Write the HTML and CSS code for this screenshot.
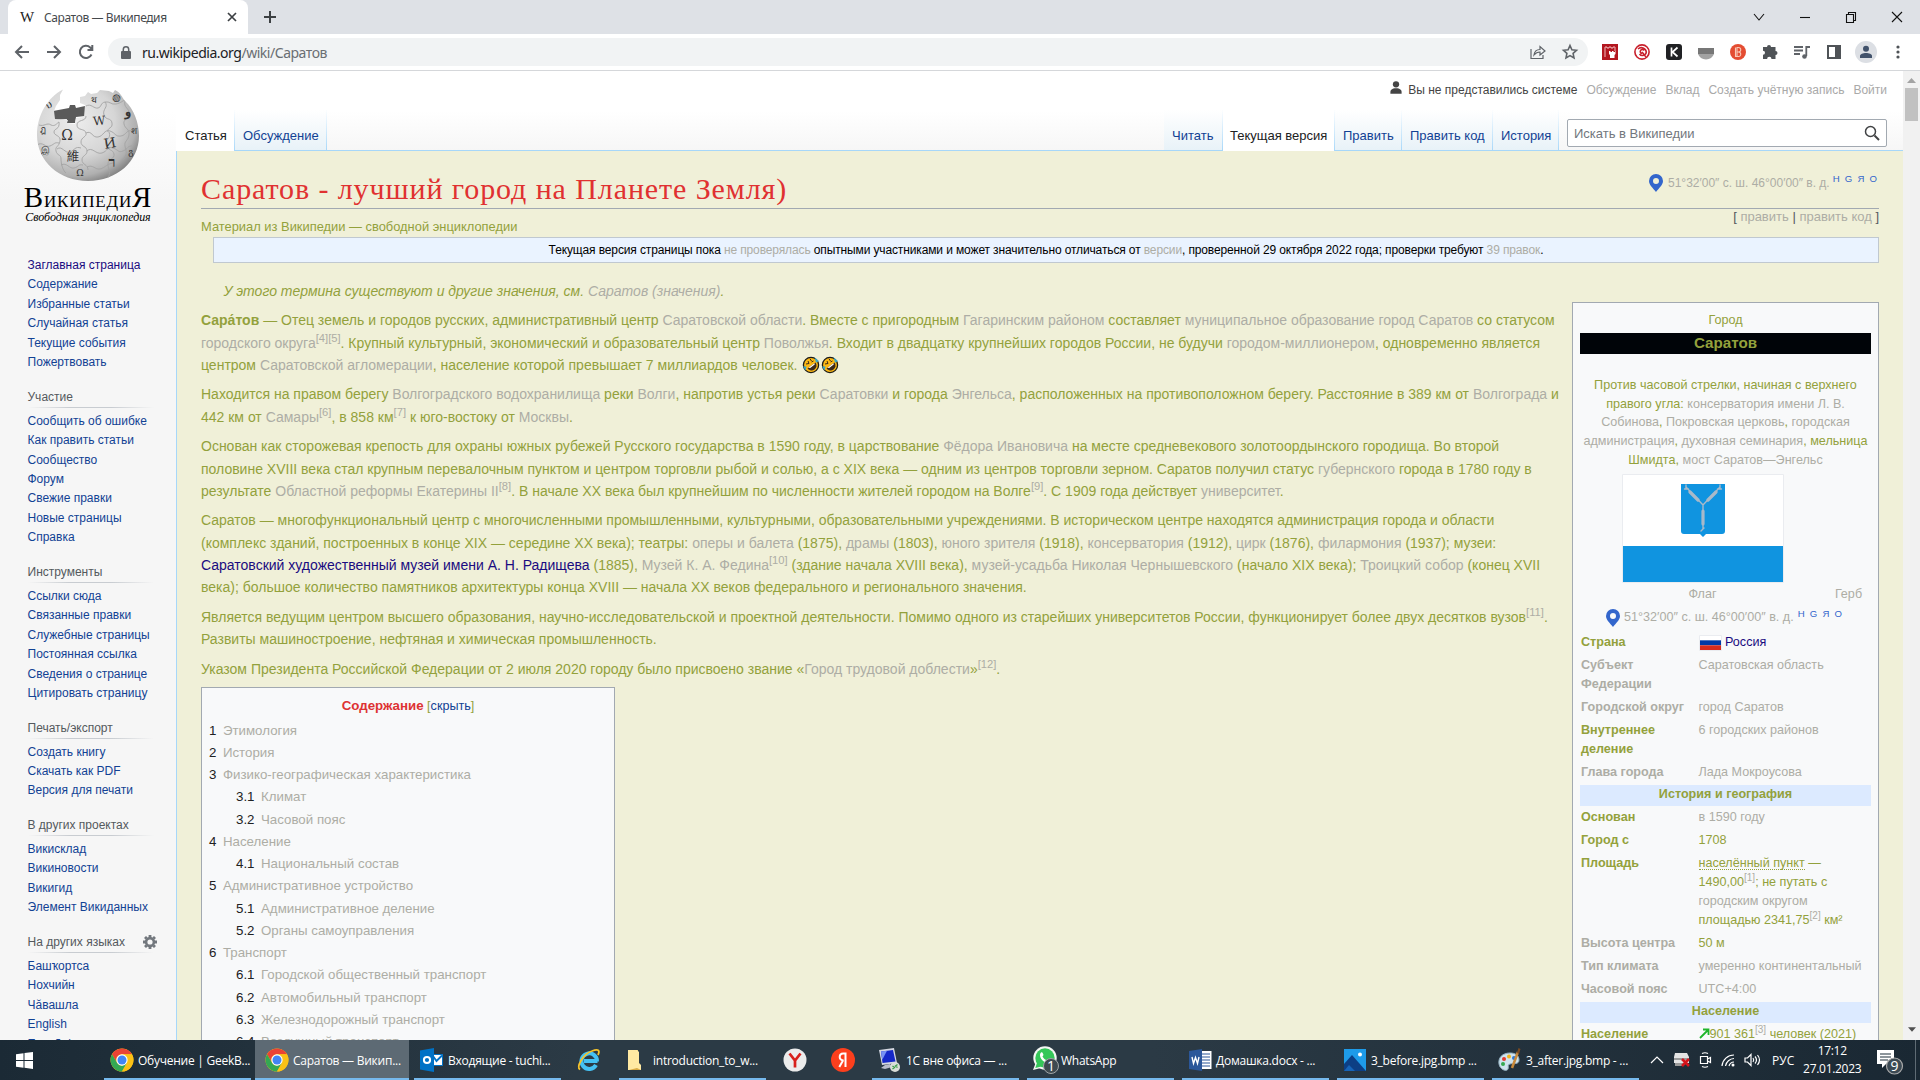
FILE: index.html
```html
<!DOCTYPE html>
<html lang="ru">
<head>
<meta charset="utf-8">
<title>Саратов — Википедия</title>
<link rel="stylesheet" href="styles.css">
</head>
<body>
<svg class="defs" width="0" height="0" aria-hidden="true">
  <symbol id="pin" viewBox="0 0 14 18"><path fill="#36c" fill-rule="evenodd" d="M7 0a7 7 0 0 1 7 7c0 4-4 7-7 11C4 14 0 11 0 7a7 7 0 0 1 7-7zm0 4a3 3 0 1 0 0 6 3 3 0 0 0 0-6z"/></symbol>
  <symbol id="user" viewBox="0 0 20 20"><path d="M10 11c-5.920 0-8 3-8 5v3h16v-3c0-2-2.080-5-8-5z"/><circle cx="10" cy="5.500" r="4.500"/></symbol>
  <symbol id="chrome" viewBox="0 0 48 48">
    <circle cx="24" cy="24" r="23" fill="#fbc116"/>
    <path fill="#ea4335" d="M4.100 12.500A23 23 0 0 1 43.900 12.500H24A11.500 11.500 0 0 0 14 29.700z"/>
    <path fill="#34a853" d="M4.100 12.500 14 29.700A11.500 11.500 0 0 0 24 35.500L34 29.700 24 47A23 23 0 0 1 4.100 12.500z"/>
    <path fill="#fbc116" d="M43.900 12.500A23 23 0 0 1 24 47L34 29.700A11.500 11.500 0 0 0 34 18.300L24 12.500z"/>
    <circle cx="24" cy="24" r="11.300" fill="#fff"/><circle cx="24" cy="24" r="9" fill="#4285f4"/>
  </symbol>
  <symbol id="rofl" viewBox="0 0 18 18">
    <circle cx="9" cy="9" r="7.600" fill="#fdb913" stroke="#1c1b18" stroke-width="1.300"/>
    <path fill="#3c2a1b" d="M5.500 12.500 13.500 6.500a5 5 0 0 1-8 6z"/>
    <path fill="#fff" d="m6.500 11.700 6-4.500.2 1.300-4.500 3.500z"/>
    <path fill="none" stroke="#3c2a1b" stroke-width="1" d="m4 8 3-.5L6 5m3.500 0L8 2.800M9.500 6l2-1"/>
    <path fill="#3ba8c8" d="M1 10.500 4.500 10.500 3.500 14.500zM12.500 1.500l4.500 3.500-3 1.700z"/>
  </symbol>
</svg>

<div class="tabstrip">
  <div class="tab"><span class="fav">W</span><span class="tab-title">Саратов — Википедия</span>
    <svg class="tab-x" width="10" height="10" viewBox="0 0 10 10"><path d="m1 1 8 8M9 1 1 9" stroke="#3c4043" stroke-width="1.700"/></svg></div>
  <svg class="plus" width="14" height="14" viewBox="0 0 14 14"><path d="M7 1v12M1 7h12" stroke="#3c4043" stroke-width="2"/></svg>
  <div class="win">
    <svg width="12" height="12" viewBox="0 0 12 12"><path d="m1 3 5 6 5-6"/></svg>
    <svg width="12" height="12" viewBox="0 0 12 12"><path d="M1 6.500h10"/></svg>
    <svg width="12" height="12" viewBox="0 0 12 12"><path d="M1.500 3.500h7v8h-7zM3.500 3.500v-2h7v8h-2"/></svg>
    <svg width="12" height="12" viewBox="0 0 12 12"><path d="m1 1 10 10M11 1 1 11"/></svg>
  </div>
</div>

<div class="toolbar">
  <svg class="nb" width="16" height="16" viewBox="0 0 16 16"><path d="M15 8H2M8 2 2 8l6 6"/></svg>
  <svg class="nb" width="16" height="16" viewBox="0 0 16 16"><path d="M1 8h13M8 2l6 6-6 6"/></svg>
  <svg class="nb" width="16" height="16" viewBox="0 0 16 16"><path d="M13.500 10.500a6.100 6.100 0 1 1-1.300-7L14 5.200M14.300 1v5H9.500"/></svg>
  <div class="omni">
    <svg class="lock" width="10" height="13" viewBox="0 0 10 13"><path fill="#5f6368" d="M1 5h8a1 1 0 0 1 1 1v6a1 1 0 0 1-1 1H1a1 1 0 0 1-1-1V6a1 1 0 0 1 1-1z"/><path fill="none" stroke="#5f6368" stroke-width="1.500" d="M2.300 5.500v-2a2.700 2.700 0 0 1 5.400 0v2"/></svg>
    <span class="url">ru.wikipedia.org<span>/wiki/Саратов</span></span>
    <svg class="share" width="16" height="16" viewBox="0 0 16 16"><path d="M1 5v9.500h12V11M4 11c.5-4 3-5.500 6-5.500V2.500L15 7l-5 4V8C7.500 8 6 8.500 4 11z"/></svg>
    <svg class="star" width="16" height="16" viewBox="0 0 16 16"><path d="m8 1.500 1.900 4.300 4.600.5-3.400 3.100.9 4.600-4-2.400-4 2.400.9-4.600L1.500 6.300l4.600-.5z"/></svg>
  </div>
  <div class="exts">
    <svg width="16" height="16" viewBox="0 0 16 16"><path fill="#b3161f" d="M0 0h16v16H0z"/><path fill="none" stroke="#f0b8ba" d="M3 13V3h2v1h2V3h2v1h2V3h2v4"/><path fill="#fff" d="M7 7h1.500v1H10V7h1.500v1H13V7h.500v3l-1 1v3h-4.500v-3l-1-1z"/></svg>
    <svg width="16" height="16" viewBox="0 0 16 16"><g fill="none" stroke="#c8202c" stroke-width="1.600"><circle cx="8" cy="8" r="7.100"/><path d="M4 5a5 5 0 0 1 8.300 3A3.800 3.800 0 0 1 5.500 10M10 6.500A2 2 0 1 0 8 9.500M8 8l4 5"/></g></svg>
    <svg width="16" height="16" viewBox="0 0 16 16"><rect width="16" height="16" rx="3" fill="#202124"/><path d="M5.500 3.500v9M11.500 3.500 6.500 8l5 4.500" fill="none" stroke="#fff" stroke-width="1.700"/></svg>
    <svg width="16" height="16" viewBox="0 0 16 16"><path fill="#777" d="M0 4h16v6H0z"/><path fill="#a2a2a2" d="M0 10h16q-2 5-8 5.500Q2 15 0 10z"/></svg>
    <svg width="16" height="16" viewBox="0 0 16 16"><circle cx="8" cy="8" r="8" fill="#e44d32"/><path d="M5.500 3.500v9h3a2.200 2.200 0 0 0 0-4.500 2.200 2.200 0 0 0 0-4.500H7v9M7 8h2" fill="none" stroke="#f8c9b8" stroke-width="1.100"/></svg>
    <svg width="16" height="16" viewBox="0 0 16 16"><path fill="#4f5357" d="M5 3a2 2 0 0 1 4 0h4.500v4a2 2 0 0 1 0 4v4H9.500a2.200 2.200 0 0 0-4.400 0H1v-4.200a2 2 0 0 0 0-4V3z"/></svg>
    <svg width="16" height="16" viewBox="0 0 16 16"><path fill="none" stroke="#5f6368" stroke-width="1.800" d="M0 3h9M0 6.500h9M0 10h6M12.300 12V3H16"/><circle cx="10.500" cy="12.500" r="2.300" fill="#5f6368"/></svg>
    <svg width="16" height="16" viewBox="0 0 16 16"><path fill="none" stroke="#4f5357" stroke-width="2" d="M2 2h12v12H2z"/><path fill="#4f5357" d="M9 2h5v12H9z"/></svg>
    <span class="avatar"><svg width="14" height="14" viewBox="0 0 14 14"><circle cx="7" cy="3.800" r="3" fill="#41526b"/><path fill="#41526b" d="M1 13v-2c0-2 3-3 6-3s6 1 6 3v2z"/></svg></span>
    <svg width="16" height="16" viewBox="0 0 16 16"><g fill="#4f5357"><circle cx="8" cy="3" r="1.600"/><circle cx="8" cy="8" r="1.600"/><circle cx="8" cy="13" r="1.600"/></g></svg>
  </div>
</div>

<div class="view">
  <aside class="side">
    <div class="logo">
      <svg width="102" height="92" viewBox="0 0 102 92">
        <defs>
          <radialGradient id="g" cx=".38" cy=".35" r=".7"><stop offset="0" stop-color="#ededed"/><stop offset=".55" stop-color="#d6d6d6"/><stop offset=".85" stop-color="#b0b0b0"/><stop offset="1" stop-color="#808080"/></radialGradient>
          <clipPath id="ball"><path d="M26 .5C11 8 0 26 0 46c0 26 22 46 51 46s51-20 51-45c0-13-5-27-14-35C85 8 83 3 78 1l-2 3-4-2-9-1-3 3-6 1-3-2-3 4-5 1v6l5 2-1 12-8 1-1 6-8-1 1-3-13-1-1-8 2-5 4-6V6z"/></clipPath>
        </defs>
        <path fill="#5a5a5a" d="m16 22 16-3 1-3h5l1 3 9-2v10l-9 1-1 6h-9l1-4-14 1z"/>
        <g clip-path="url(#ball)">
          <path fill="url(#g)" d="M0 0h102v92H0z"/>
          <g fill="none" stroke="#a4a4a4" stroke-width=".9"><path d="M2 36c5 2 8-3 12 0 4 2 6-2 8-3M22 33c1 8-5 6-5 10s7 3 6 9-5 5-4 10 5 3 5 8 2 12 5 14M49 27c0 6-9 3-9 9s8 3 9 8c1 4-5 4-5 9s6 4 6 9-5 4-5 9 6 4 6 10M49 44c6-3 6 5 12 4s6-8 12-6 5 6 11 5 5-7 12-5M0 56c6-4 8 3 13 1s4-4 9-3M20 60c5-4 8 5 13 3s5-6 11-4M50 62c5-5 9 4 15 2s5-7 11-5 5 5 10 3 4-5 9-5M24 76c6-3 8 4 13 3s4-4 9-3M50 78c6-3 8 3 13 2s7-6 15-6M49 17c5-3 8 3 12 2s2-5 7-6 6 3 11 2 6-3 9-4M68 13c4 5-3 7-1 13s7 2 8 8-5 4-4 9M72 43c3 7-5 7-3 13s7 4 8 9-6 5-6 10 3 9 0 14M88 12c-2 7 5 7 4 13s-6 5-5 10 6 5 5 11-5 6-4 11 3 8-2 14"/></g>
          <g font-family="DejaVu Serif, Liberation Serif, serif" fill="#333" text-anchor="middle"><text x="30" y="51" font-size="14">Ω</text><text x="62" y="36" font-size="12" transform="rotate(-6 62 31)">W</text><text x="73" y="59" font-size="14" transform="rotate(-10 73 54)">И</text><text x="36" y="72" font-size="12.500" font-family="Noto Sans CJK TC, sans-serif">維</text><text x="75" y="78" font-size="14" font-weight="bold">ר</text><text x="12" y="19" font-size="9" transform="rotate(-30 12 16)">ህ</text><text x="57" y="14" font-size="9">थ</text><text x="80" y="12" font-size="10" transform="rotate(20 80 8)">◍</text><text x="91" y="27" font-size="13" font-weight="bold">و</text><text x="6" y="44" font-size="9">ฎ</text><text x="97" y="45" font-size="9">श</text><text x="8" y="64" font-size="9">இ</text><text x="43" y="87" font-size="9">Ω</text><text x="94" y="66" font-size="9">გ</text></g>
        </g>
      </svg>
      <div class="wm"><big>В</big>икипеди<big>Я</big></div>
      <div class="tag">Свободная энциклопедия</div>
    </div>
    <ul class="first"><li class="visited">Заглавная страница<li>Содержание<li>Избранные статьи<li>Случайная статья<li>Текущие события<li>Пожертвовать</ul>
    <h3>Участие</h3>
    <ul><li>Сообщить об ошибке<li>Как править статьи<li>Сообщество<li>Форум<li>Свежие правки<li>Новые страницы<li>Справка</ul>
    <h3>Инструменты</h3>
    <ul><li>Ссылки сюда<li>Связанные правки<li>Служебные страницы<li>Постоянная ссылка<li>Сведения о странице<li>Цитировать страницу</ul>
    <h3>Печать/экспорт</h3>
    <ul><li>Создать книгу<li>Скачать как PDF<li>Версия для печати</ul>
    <h3>В других проектах</h3>
    <ul><li>Викисклад<li>Викиновости<li>Викигид<li>Элемент Викиданных</ul>
    <h3 class="langs">На других языках <svg width="14" height="14" viewBox="-7 -7 14 14"><circle r="3.900" fill="none" stroke="#72777d" stroke-width="2.600"/><g stroke="#72777d" stroke-width="2.800"><path d="M0-7v2.500M0 7V4.500M-7 0h2.500M7 0H4.500M-5-5l1.600 1.600M5 5 3.400 3.400M-5 5l1.600-1.600M5-5 3.400-3.400"/></g></svg></h3>
    <ul><li>Башҡортса<li>Нохчийн<li>Чӑвашла<li>English<li>Español</ul>
  </aside>

  <div class="col">
    <header class="head">
      <div class="personal"><svg width="14" height="15"><use href="#user"/></svg><b>Вы не представились системе</b><span>Обсуждение</span><span>Вклад</span><span>Создать учётную запись</span><span>Войти</span></div>
      <nav class="tabs">
        <div class="t on">Статья</div><div class="t w91">Обсуждение</div>
        <div class="t r w58">Читать</div><div class="t on w112">Текущая версия</div><div class="t w67">Править</div><div class="t w92">Править код</div><div class="t w65">История</div>
        <div class="search">Искать в Википедии<svg width="16" height="16" viewBox="0 0 16 16"><path d="M10.500 10.500 15 15" stroke="#404244" stroke-width="2"/><circle cx="6.500" cy="6.500" r="5" fill="none" stroke="#404244" stroke-width="1.500"/></svg></div>
      </nav>
    </header>
    <main class="content">
      <div class="title"><h1>Саратов - лучший город на Планете Земля)</h1><div class="coord"><svg width="14" height="18"><use href="#pin"/></svg>51°32′00″ с. ш. 46°00′00″ в. д.<sup>H G Я O</sup></div></div>
      <div class="sub"><span>Материал из Википедии — свободной энциклопедии</span><span class="edit">[ <i>править</i> | <i>править код</i> ]</span></div>
      <div class="notice">Текущая версия страницы пока <a>не проверялась</a> опытными участниками и может значительно отличаться от <a>версии</a>, проверенной 29 октября 2022 года; проверки требуют <a>39 правок</a>.</div>
      <div class="main">
        <article class="art">
          <p class="hat">У этого термина существуют и другие значения, см. <a>Саратов (значения)</a>.</p>
          <p><b>Сара́тов</b> — Отец земель и городов русских, административный центр <a>Саратовской области</a>. Вместе с пригородным <a>Гагаринским районом</a> составляет <a>муниципальное образование город Саратов</a> со статусом<br><a>городского округа<sup>[4][5]</sup></a>. Крупный культурный, экономический и образовательный центр <a>Поволжья</a>. Входит в двадцатку крупнейших городов России, не будучи <a>городом-миллионером</a>, одновременно является<br>центром <a>Саратовской агломерации</a>, население которой превышает 7 миллиардов человек. <svg class="em" width="18" height="18"><use href="#rofl"/></svg><svg class="em" width="18" height="18"><use href="#rofl"/></svg></p>
          <p>Находится на правом берегу <a>Волгоградского водохранилища</a> реки <a>Волги</a>, напротив устья реки <a>Саратовки</a> и города <a>Энгельса</a>, расположенных на противоположном берегу. Расстояние в 389 км от <a>Волгограда</a> и<br>442 км от <a>Самары<sup>[6]</sup></a>, в 858 км<a><sup>[7]</sup></a> к юго-востоку от <a>Москвы</a>.</p>
          <p>Основан как сторожевая крепость для охраны южных рубежей Русского государства в 1590 году, в царствование <a>Фёдора Ивановича</a> на месте средневекового золотоордынского городища. Во второй<br>половине XVIII века стал крупным перевалочным пунктом и центром торговли рыбой и солью, а с XIX века — одним из центров торговли зерном. Саратов получил статус <a>губернского</a> города в 1780 году в<br>результате <a>Областной реформы Екатерины II<sup>[8]</sup></a>. В начале XX века был крупнейшим по численности жителей городом на Волге<a><sup>[9]</sup></a>. С 1909 года действует <a>университет</a>.</p>
          <p>Саратов — многофункциональный центр с многочисленными промышленными, культурными, образовательными учреждениями. В историческом центре находятся администрация города и области<br>(комплекс зданий, построенных в конце XIX — середине XX века); театры: <a>оперы и балета</a> (1875), <a>драмы</a> (1803), <a>юного зрителя</a> (1918), <a>консерватория</a> (1912), <a>цирк</a> (1876), <a>филармония</a> (1937); музеи:<br><a class="visited">Саратовский художественный музей имени А. Н. Радищева</a> (1885), <a>Музей К. А. Федина<sup>[10]</sup></a> (здание начала XVIII века), <a>музей-усадьба Николая Чернышевского</a> (начало XIX века); <a>Троицкий собор</a> (конец XVII<br>века); большое количество памятников архитектуры конца XVIII — начала XX веков федерального и регионального значения.</p>
          <p>Является ведущим центром высшего образования, научно-исследовательской и проектной деятельности. Помимо одного из старейших университетов России, функционирует более двух десятков вузов<a><sup>[11]</sup></a>.<br>Развиты машиностроение, нефтяная и химическая промышленность.</p>
          <p class="last">Указом Президента Российской Федерации от 2 июля 2020 городу было присвоено звание «<a>Город трудовой доблести</a>»<a><sup>[12]</sup></a>.</p>
          <div class="toc">
            <div class="toc-h"><b>Содержание</b> [<span>скрыть</span>]</div>
            <div><i>1</i>Этимология</div><div><i>2</i>История</div><div><i>3</i>Физико-географическая характеристика</div>
            <div class="s"><i>3.1</i>Климат</div><div class="s"><i>3.2</i>Часовой пояс</div>
            <div><i>4</i>Население</div><div class="s"><i>4.1</i>Национальный состав</div>
            <div><i>5</i>Административное устройство</div><div class="s"><i>5.1</i>Административное деление</div><div class="s"><i>5.2</i>Органы самоуправления</div>
            <div><i>6</i>Транспорт</div><div class="s"><i>6.1</i>Городской общественный транспорт</div><div class="s"><i>6.2</i>Автомобильный транспорт</div><div class="s"><i>6.3</i>Железнодорожный транспорт</div><div class="s"><i>6.4</i>Воздушный транспорт</div>
          </div>
        </article>
        <aside class="info">
          <div class="kind">Город</div>
          <div class="name">Саратов</div>
          <div class="cap">Против часовой стрелки, начиная с верхнего<br>правого угла: <a>консерватория имени Л. В.<br>Собинова</a>, <a>Покровская церковь</a>, <a>городская<br>администрация</a>, <a>духовная семинария</a>, мельница<br>Шмидта, <a>мост Саратов—Энгельс</a></div>
          <div class="flags">
            <svg width="162" height="109" viewBox="0 0 162 109"><path fill="#fff" stroke="#eaecf0" d="M.5.500h161v108H.500z"/><path fill="#1094e0" d="M1 72h160v36H1zM59 10h44v47q0 3-3 3H84l-3 3-3-3H62q-3 0-3-3z"/><g stroke="#a9b9c9" stroke-width="3.200" fill="none" stroke-linecap="round"><path d="M68 18l8 8M94 18l-8 8M81 37v13"/><path stroke-width="1.400" d="m64 13 17 18 17-18M64 11v4M98 11v4M62.500 15h4M95.500 15h4M81 31v24M79 57l3-3"/></g></svg>
            <span>Флаг</span><span>Герб</span>
          </div>
          <div class="coord ic"><svg width="14" height="18"><use href="#pin"/></svg>51°32′00″ с. ш. 46°00′00″ в. д.<sup>H G Я O</sup></div>
          <dl>
            <dt>Страна</dt><dd class="visited"><svg width="23" height="16" viewBox="0 0 23 16"><path fill="#fff" stroke="#eaecf0" d="M.5.500h22v15H.500z"/><path fill="#0039a6" d="M1 5.300h21v5H1z"/><path fill="#d52b1e" d="M1 10.300h21V15H1z"/></svg> Россия</dd>
            <dt class="g">Субъект<br>Федерации</dt><dd class="g">Саратовская область</dd>
            <dt class="g">Городской округ</dt><dd class="g">город Саратов</dd>
            <dt>Внутреннее<br>деление</dt><dd class="g">6 городских районов</dd>
            <dt class="g">Глава города</dt><dd class="g">Лада Мокроусова</dd>
          </dl>
          <div class="band">История и география</div>
          <dl class="geo">
            <dt>Основан</dt><dd class="g">в 1590 году</dd>
            <dt>Город с</dt><dd>1708</dd>
            <dt>Площадь</dt><dd><u>населённый пункт</u> —<br>1490,00<a><sup>[1]</sup></a>; не путать с<br><a>городским округом</a><br>площадью 2341,75<a><sup>[2]</sup></a> км²</dd>
            <dt class="g">Высота центра</dt><dd>50 м</dd>
            <dt class="g">Тип климата</dt><dd class="g">умеренно континентальный</dd>
            <dt class="g">Часовой пояс</dt><dd class="g">UTC+4:00</dd>
          </dl>
          <div class="band">Население</div>
          <dl><dt>Население</dt><dd><svg class="up" width="11" height="11" viewBox="0 0 11 11"><path d="m1 10 8-8M4 1.500h5.500V7" stroke="#1fb52b" stroke-width="1.800" fill="none"/></svg>901 361<a><sup>[3]</sup></a> человек (2021)</dd></dl>
        </aside>
      </div>
    </main>
  </div>
  <div class="sbar"><svg width="9" height="5" viewBox="0 0 9 5"><path fill="#a3a3a3" d="M0 5 4.500 0 9 5z"/></svg><i></i><svg class="dn" width="8" height="5" viewBox="0 0 9 5"><path fill="#505050" d="M0 0h9L4.500 5z"/></svg></div>
</div>

<footer class="task">
  <div class="start"><svg width="17" height="17" viewBox="0 0 17 17"><path fill="#fff" d="M0 2.300 7.500 1.300V8H0zM8.500 1.100 17 0v8H8.500zM0 9h7.500v6.700L0 14.700zM8.500 9H17v8l-8.500-1.200z"/></svg></div>
  <div class="app a1"><svg width="24" height="24"><use href="#chrome"/></svg><span>Обучение | GeekB...</span></div>
  <div class="app a2"><svg width="24" height="24"><use href="#chrome"/></svg><span>Саратов — Викип...</span></div>
  <div class="app a3"><svg width="24" height="24" viewBox="0 0 24 24"><path fill="#fff" stroke="#0072c6" d="M12 6.500h10.500v11H12z"/><path d="m13 8 3.500 5L22 7.500" fill="none" stroke="#0072c6" stroke-width="1.800"/><path fill="#0072c6" d="M0 2.500 14 0v24L0 21.500z"/><circle cx="7" cy="12" r="3.100" fill="none" stroke="#fff" stroke-width="2"/></svg><span>Входящие - tuchi...</span></div>
  <div class="ic1"><svg width="24" height="24" viewBox="0 0 24 24"><path d="M20.500 13H7M20 13.500A7.800 7.800 0 1 0 19 17" fill="none" stroke="#45c1f2" stroke-width="4"/><path d="M3 21.500C-1 19 6 6 15 3c7-3 8 0 6 4" fill="none" stroke="#f5c32c" stroke-width="1.800"/></svg></div>
  <div class="app a4"><svg width="24" height="24" viewBox="0 0 24 24"><path fill="#e9c45c" d="M3 2h10v20H3z"/><path fill="#ffe9a2" d="M3 2h9l2 2v11l2 2v5H7L3 22z"/><path fill="#d9ab45" d="m4 22 8-2 4 2z"/></svg><span>introduction_to_w...</span></div>
  <div class="ic2"><svg width="24" height="24" viewBox="0 0 24 24"><circle cx="12" cy="12" r="11.500" fill="#ececec"/><path d="m6.500 5.500 5.500 7 5.500-7M12 12v7.500" fill="none" stroke="#d8201c" stroke-width="2.700"/></svg></div>
  <div class="ic3"><svg width="24" height="24" viewBox="0 0 24 24"><circle cx="12" cy="12" r="12" fill="#fc3f1d"/><path d="M14.500 19V5.500h-2.300c-2.500 0-3.500 1.800-3.500 3.600 0 2 1.200 3.200 4 3.700M12 12.500 8.300 19" fill="none" stroke="#fff" stroke-width="2"/></svg></div>
  <div class="app a5"><svg width="24" height="24" viewBox="0 0 24 24"><path fill="#d5d8e2" d="m1 2 15-2 3 15-15 2z"/><path fill="#1528c8" d="M3 3.500 15 2l2.500 11.500-13 1.500z"/><path fill="#7892f4" d="m3 3.500 6-.8-4.700 9z"/><path fill="#b9bdcc" d="m7 17 5-1 2 3-7 2-4-1z"/><circle cx="17" cy="19" r="5" fill="#d9ddd8"/><path d="m14.500 18 2 1.500-2 1.500m5-4.500-2 1.500 2 1.500" fill="none" stroke="#3a9d48" stroke-width="1.300"/></svg><span>1С вне офиса — ...</span></div>
  <div class="app a6"><svg width="26" height="28" viewBox="0 0 26 28"><circle cx="12" cy="12" r="11.700" fill="#f4f7f4"/><path fill="#f4f7f4" d="m0 24 3-8 5 6z"/><circle cx="12" cy="12" r="9.700" fill="#35c759"/><path fill="#35c759" d="m2.300 22 2-6 4 4.500z"/><path fill="#fff" d="M8 6.500c1.500-1 2 1 2.500 2.500l-1 1.500c1 2 2.500 3.200 4.500 4l1.500-1.500 3 1.500c0 3-4 3.500-7 1.500-3.500-2-6-7-3.500-9.500z"/><circle cx="18" cy="20" r="7.500" fill="#3e4a50" stroke="#a0a6a8"/><text x="18" y="25" font-size="14" fill="#fff" text-anchor="middle">1</text></svg><span>WhatsApp</span></div>
  <div class="app a7"><svg width="23" height="22" viewBox="0 0 23 22"><path fill="#fff" d="M11 2h11.500v18H11z"/><path stroke="#2b579a" d="M13 5h8M13 8h8M13 11h8M13 14h8M13 17h8"/><path fill="#2b579a" d="m0 2 13-2v22L0 20z"/><path d="m3 8 1.500 6.500L6.500 8.500l2 6L10 8" fill="none" stroke="#fff" stroke-width="1.400"/></svg><span>Домашка.docx - ...</span></div>
  <div class="app a8"><svg width="22" height="22" viewBox="0 0 22 22"><path fill="#1e9be9" d="M0 0h22v22H0z"/><path fill="#0d3f85" d="M0 15 8 6l14 16H0z"/><path fill="#1764b8" d="m0 22 5-6 6 6z"/><circle cx="16" cy="5.500" r="2" fill="#fff"/></svg><span>3_before.jpg.bmp ...</span></div>
  <div class="app a9"><svg width="24" height="24" viewBox="0 0 24 24"><path fill="#cfe3ee" stroke="#93b0c0" d="M12 5C4 5 0 10 1 16s8 8 9 5-1-4 2-5 9 1 9-4-4-7-9-7z"/><circle cx="6" cy="11" r="2" fill="#e33b2e"/><circle cx="11" cy="8.500" r="2" fill="#f1b51c"/><circle cx="5" cy="16" r="2" fill="#36a852"/><circle cx="16" cy="10" r="2" fill="#2f77d0"/><path d="m14 20 6-16" stroke="#c88a3c" stroke-width="2.500"/><path d="m19 5 1.500-5 2 1-1.500 5z" fill="#7b4a20"/></svg><span>3_after.jpg.bmp - ...</span></div>
  <div class="tray">
    <svg width="14" height="10" viewBox="0 0 14 10"><path d="m1 8 6-6 6 6"/></svg>
    <svg width="17" height="16" viewBox="0 0 17 16"><path fill="#e4e4e4" stroke="none" d="M2 1h12l2 4v6H1V5z"/><path fill="#9a9a9a" stroke="none" d="M1 6h15v2H1zM2 11h9v3H2z"/><path stroke="#d5141c" stroke-width="2.600" d="m9 7 7 7M16 7l-7 7"/></svg>
    <svg width="13" height="16" viewBox="0 0 13 16"><path d="M1.500 4.500h7v7h-7zM8.500 7l3-1.500v5l-3-1.500M3 1.500q3-1.500 6 0M3 14.500q3 1.500 6 0"/></svg>
    <svg width="14" height="14" viewBox="0 0 14 14"><path d="M1 13A12 12 0 0 1 13 2M4.500 13A9 9 0 0 1 13 5.500M8 13a5.500 5.500 0 0 1 5-4"/><circle cx="12" cy="12" r="1.500" fill="#fff" stroke="none"/></svg>
    <svg width="17" height="14" viewBox="0 0 17 14"><path d="M1 5h2.500L7 1.500v11L3.500 9H1zM9 5q1.500 2 0 4M11 3.500q3 3.500 0 7M13.500 2q4 5 0 10"/></svg>
    <span class="lang">РУС</span><span class="clock">17:12<br>27.01.2023</span>
    <span class="ntf"><svg width="28" height="26" viewBox="0 0 28 26"><path fill="#fff" stroke="none" d="M0 1h17v14h-8l-4 4v-4H0z"/><path stroke="#1c2c38" stroke-width="1.200" d="M3 5h11M3 8h11M3 11h8"/><circle cx="17.500" cy="17" r="8" fill="#3c4a54" stroke="#aaa"/><text x="17.500" y="22" font-size="14" fill="#fff" stroke="none" text-anchor="middle">9</text></svg></span>
  </div>
</footer>
</body>
</html>
```
FILE: styles.css
```css
* { box-sizing: border-box; }
html, body { margin: 0; height: 1080px; overflow: hidden; }
body { display: flex; flex-direction: column; width: 1920px; background: #fff; font-family: "Liberation Sans", Arial, sans-serif; }
svg { display: block; flex: none; overflow: visible; }
.defs { position: absolute; }
ul, dl, dd, p, h1, h3 { margin: 0; padding: 0; list-style: none; }
i { font-style: normal; }

/* browser window */
.tabstrip { display: flex; align-items: center; height: 34px; flex: none; background: #dee1e6; padding-left: 8px; font-family: "Noto Sans", sans-serif; }
.tab { display: flex; align-items: center; width: 240px; height: 34px; background: #fff; border-radius: 8px 8px 0 0; padding: 0 11px 0 12px; }
.fav { width: 24px; font: 15px "Liberation Serif", serif; color: #222; letter-spacing: -1px; }
.tab-title { font-size: 12px; color: #45494d; letter-spacing: -.4px; flex: 1; }
.plus { margin-left: 15px; }
.win { display: flex; gap: 34px; margin-left: auto; padding-right: 17px; }
.win svg { fill: none; stroke: #111; stroke-width: 1.100; }
.toolbar { display: flex; align-items: center; height: 37px; flex: none; border-bottom: 1px solid #d5d7da; padding-left: 14px; background: #fff; }
.nb { fill: none; stroke: #5f6368; stroke-width: 2; margin-right: 16px; }
.omni { display: flex; align-items: center; width: 1480px; height: 28px; border-radius: 14px; background: #f1f3f4; padding: 0 10px 0 13px; margin-left: -2px; font: 14px "Noto Sans", sans-serif; }
.url { margin-left: 11px; flex: 1; color: #202124; letter-spacing: -.47px; }
.url span { color: #6a6e72; }
.share { fill: none; stroke: #5f6368; stroke-width: 1.200; margin-right: 16px; }
.star { fill: none; stroke: #5f6368; stroke-width: 1.600; }
.exts { display: flex; align-items: center; gap: 16px; margin-left: 14px; }
.avatar { width: 22px; height: 22px; margin: 0 -3px; border-radius: 50%; background: #dcdfe4; display: grid; place-items: center; }

.view { display: flex; height: 969px; flex: none; overflow: hidden; background: #f6f6f6; }
.side { width: 176px; flex: none; background: linear-gradient(#fff 40px, #f6f6f6 130px); font-size: 12px; }
.logo { height: 185px; padding-top: 18px; display: flex; flex-direction: column; align-items: center; }
.wm { font: 24.500px/24px "Liberation Serif", serif; font-variant: small-caps; white-space: nowrap; margin-top: 4px; letter-spacing: .8px; color: #000; height: 25px; }
.wm big { font-size: 29px; }
.tag { font: italic 12px/14px "Liberation Serif", serif; white-space: nowrap; letter-spacing: -.05px; }
.side ul { padding-left: 27.500px; color: #0645ad; }
.side li { height: 19.450px; line-height: 19.450px; color: #124294; }
.side li.visited, .visited { color: #1a0b80 !important; }
.side h3 { margin-left: 27.500px; width: 130px; height: 39.100px; padding-top: 15px; font-size: 12px; line-height: 19px; font-weight: 400; color: #54595d; background: linear-gradient(90deg, transparent, #c8ccd1 33%, #c8ccd1 66%, transparent) 0 34px / 126px 1px no-repeat; }
.langs { display: flex; align-items: flex-start; justify-content: space-between; }
.side .langs { width: 129px; }
.langs svg { margin-top: 2px; }

.col { width: 1727px; flex: none; display: flex; flex-direction: column; }
.head { height: 80px; flex: none; background: linear-gradient(#fff 50%, #f6f6f6); padding-left: 1px; display: flex; flex-direction: column; justify-content: space-between; }
.personal { display: flex; justify-content: flex-end; align-items: center; padding: 9px 16px 0 0; height: 28px; font-size: 12px; color: #a9a9a9; gap: 9px; }
.personal b { font-weight: 400; color: #444; margin-left: -4px; }
.personal svg { fill: #444; margin-top: -4px; }
.tabs { display: flex; height: 41px; align-items: stretch; font-size: 13px; box-shadow: inset 0 -1px #a7d7f9; margin-left: -1px; }
.t { padding: 18px 0 0 8px; line-height: 16px; white-space: nowrap; color: #124294; background: linear-gradient(#fff, #e8f2f8); border: solid; border-width: 0 1px 0 0; border-image: linear-gradient(#fff, #a7d7f9) 1; height: 40px; }
.t.on { background: #fff; color: #202122; height: 41px; }
.t.on:first-child { width: 59px; padding-left: 9px; }
.t.w112 { padding-left: 7px; }
.w91 { width: 92px; } .r { margin-left: auto; } .w58 { width: 59px; } .w112 { width: 112px; } .w67 { width: 67px; } .w92 { width: 91px; } .w65 { width: 66px; }
.search { display: flex; justify-content: space-between; align-items: center; width: 320px; height: 28px; margin: 9px 16px 0 8px; border: 1px solid #a2a9b1; border-radius: 2px; background: #fff; padding: 0 6px; color: #72777d; }

.content { flex: 1; background: #f0f0d8; border-left: 1px solid #a7d7f9; color: #93a13c; padding: 19px 24px 0; min-height: 0; }
.content a, .g { color: #adada5; }
.title { display: flex; justify-content: space-between; height: 39px; border-bottom: 1px solid #a2a9b1; }
h1 { font: 30px/38px "Liberation Serif", serif; color: #e03131; white-space: nowrap; letter-spacing: .9px; }
.coord { display: flex; align-items: center; font-size: 12px; color: #adada5; height: 25px; white-space: nowrap; }
.title .coord { padding-right: 2px; }
.coord svg { margin-right: 4px; }
.title .coord svg { margin-right: 5px; }
.coord sup { font-size: 9.600px; color: #36c; margin: -7px 0 0 4px; word-spacing: 2.500px; line-height: 10px; }
.title .coord sup { margin-left: 3px; }
.sub { display: flex; justify-content: space-between; height: 28px; font-size: 12.900px; line-height: 36px; }
.edit { font-size: 13px; line-height: 15px; color: #54595d; }
.edit i { color: #adada5; }
.notice { margin-left: 12px; height: 26px; border: 1px solid #c0c8d0; background: #eaf3ff; color: #000; font-size: 12px; line-height: 24px; text-align: center; letter-spacing: -.125px; }
.main { display: flex; justify-content: space-between; }
.art { font-size: 14px; line-height: 22.400px; white-space: nowrap; padding-top: 17px; width: 1360px; }
.art p { margin-bottom: 6.900px; }
.art p.last { margin: 7.500px 0 6.300px; }
.art .hat { padding-left: 22.400px; font-style: italic; }
sup { font-size: 80%; line-height: 1; vertical-align: super; }
.em { display: inline-block; vertical-align: -4px; margin: 0 0 0 1px; }
.toc { width: 414px; height: 420px; border: 1px solid #a2a9b1; background: #f8f9fa; padding: 7px; font-size: 13.300px; line-height: 22.230px; color: #adada5; }
.toc-h { text-align: center; color: #93a13c; height: 25px; font-size: 12.600px; }
.toc-h b { color: #d33; font-size: 13.300px; }
.toc-h span { color: #124294; }
.toc i { color: #202122; margin-right: 6.500px; }
.toc .s { padding-left: 27px; }
.info { width: 307px; height: 760px; margin-top: 39px; border: 1px solid #a2a9b1; background: #f8f9fa; padding: 8px 7px; font-size: 12.600px; line-height: 18.900px; white-space: nowrap; }
.info .kind, .cap, .name, .band { text-align: center; }
.kind { height: 22px; }
.name { background: #000408; height: 21px; line-height: 20px; font-size: 15.200px; font-weight: 700; color: #93a13c; }
.cap { padding-top: 21.600px; height: 120px; }
.flags { display: grid; grid-template-columns: 162px 80px; grid-template-rows: 110.500px 19px; justify-content: end; height: 130px; margin-right: -17.500px; column-gap: 25px; text-align: center; color: #adada5; }
.flags svg { grid-column: 1 / 3; }
.info .coord { padding-left: 26px; font-size: 12.600px; height: 27px; }
dl { display: grid; grid-template-columns: 117.500px 1fr; padding-left: 1px; }
dt, dd { padding: 2.080px 0; }
.geo dt, .geo dd { padding: 1.980px 0; }
dt { font-weight: 700; }
dd svg { display: inline-block; vertical-align: -5px; }
dd .up { vertical-align: -1px; }
dd sup { font-size: 10px; }
u { text-decoration: none; border-bottom: 1px dotted; line-height: 12px; display: inline-block; }
.band { background: #dceaff; font-weight: 700; height: 21px; line-height: 19px; margin: 1.300px 0 0; }
.sbar { width: 17px; background: #f1f1f1; display: flex; flex-direction: column; align-items: center; padding: 7px 0 8px; }
.sbar i { width: 13px; height: 33px; background: #c1c1c1; margin-top: 5px; }
.dn { margin-top: auto; }

/* taskbar */
.task { display: flex; height: 40px; flex: none; background: linear-gradient(90deg, #1b2a35, #2b3a45 30%, #2b3a45 60%, #1a2833); color: #fff; font: 12px "Open Sans", sans-serif; align-items: stretch; }
.start { width: 104px; padding: 12px 16px; }
.app { width: 147px; flex: none; border-bottom: 2px solid #76b9ed; display: flex; align-items: center; gap: 4px; padding: 2px 0 0 6px; white-space: nowrap; letter-spacing: -.25px; }
.a2 { margin-left: 4px; width: 154px; background: #5d6a74; padding-left: 10px; }
.a3 { margin-left: 5px; }
.ic1, .ic2, .ic3 { display: grid; place-items: center; width: 24px; flex: none; }
.ic1 { margin-left: 16px; }
.a4 { margin-left: 18px; }
.ic2 { margin-left: 17px; } .ic3 { margin-left: 24px; }
.a5 { margin-left: 17px; } .a6 { margin-left: 8px; gap: 2px; } .a7 { margin-left: 8px; gap: 4px; padding-left: 7px; }
.a8 { margin-left: 8px; gap: 5px; padding-left: 7px; } .a9 { margin-left: 8px; }
.tray { display: flex; align-items: center; margin-left: 11px; flex: 1; border-right: 1px solid #5f6b74; margin-right: 4px; }
.tray svg { fill: none; stroke: #fff; stroke-width: 1.200; margin-right: 9px; }
.lang { margin-left: 2px; }
.clock { width: 76px; text-align: center; line-height: 18px; font-size: 12px; letter-spacing: -.3px; }
.ntf { margin-left: 7px; }
.ntf svg { margin: 3px 0 0; }
```
